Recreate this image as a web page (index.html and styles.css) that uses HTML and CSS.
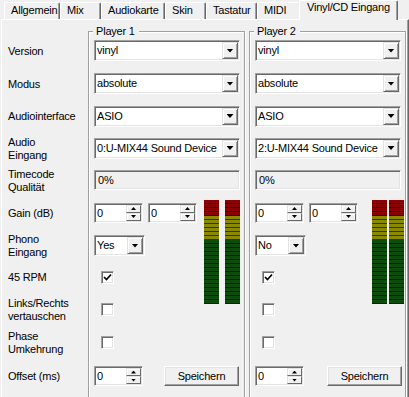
FILE: index.html
```html
<!DOCTYPE html>
<html>
<head>
<meta charset="utf-8">
<link rel="stylesheet" href="styles.css">
</head>
<body>
<div class="tabs">
  <div class="tab">Allgemein</div>
  <div class="tab">Mix</div>
  <div class="tab">Audiokarte</div>
  <div class="tab">Skin</div>
  <div class="tab">Tastatur</div>
  <div class="tab">MIDI</div>
  <div class="tab active">Vinyl/CD Eingang</div>
</div>
<div class="panel">
  <div class="labels rows">
    <div class="lbl">Version</div>
    <div class="lbl">Modus</div>
    <div class="lbl">Audiointerface</div>
    <div class="lbl">Audio<br>Eingang</div>
    <div class="lbl">Timecode<br>Qualität</div>
    <div class="lbl">Gain (dB)</div>
    <div class="lbl">Phono<br>Eingang</div>
    <div class="lbl">45 RPM</div>
    <div class="lbl">Links/Rechts<br>vertauschen</div>
    <div class="lbl">Phase<br>Umkehrung</div>
    <div class="lbl">Offset (ms)</div>
  </div>

  <div class="group group-1">
    <span class="legend">Player 1</span>
    <div class="rows grid">
      <div class="combo full"><span class="combo-text">vinyl</span><span class="combo-btn"></span></div>
      <div class="combo full"><span class="combo-text">absolute</span><span class="combo-btn"></span></div>
      <div class="combo full"><span class="combo-text">ASIO</span><span class="combo-btn"></span></div>
      <div class="combo full"><span class="combo-text">0:U-MIX44 Sound Device</span><span class="combo-btn"></span></div>
      <div class="field full">0%</div>
      <div class="pair">
        <div class="spin"><span class="spin-text">0</span><span class="spin-btns"><span class="sb up"></span><span class="sb down"></span></span></div>
        <div class="spin"><span class="spin-text">0</span><span class="spin-btns"><span class="sb up"></span><span class="sb down"></span></span></div>
      </div>
      <div class="combo small"><span class="combo-text">Yes</span><span class="combo-btn"></span></div>
      <div class="check checked"><svg width="9" height="9" viewBox="0 0 9 9"><polyline points="1,4 3.5,6.5 8,1.5" fill="none" stroke="#000" stroke-width="1.7"/></svg></div>
      <div class="check"></div>
      <div class="check"></div>
      <div class="pair full">
        <div class="spin"><span class="spin-text">0</span><span class="spin-btns"><span class="sb up"></span><span class="sb down"></span></span></div>
        <div class="button">Speichern</div>
      </div>
      <div class="meters">
        <div class="meter"></div>
        <div class="meter"></div>
      </div>
    </div>
  </div>

  <div class="group group-2">
    <span class="legend">Player 2</span>
    <div class="rows grid">
      <div class="combo full"><span class="combo-text">vinyl</span><span class="combo-btn"></span></div>
      <div class="combo full"><span class="combo-text">absolute</span><span class="combo-btn"></span></div>
      <div class="combo full"><span class="combo-text">ASIO</span><span class="combo-btn"></span></div>
      <div class="combo full"><span class="combo-text">2:U-MIX44 Sound Device</span><span class="combo-btn"></span></div>
      <div class="field full">0%</div>
      <div class="pair">
        <div class="spin"><span class="spin-text">0</span><span class="spin-btns"><span class="sb up"></span><span class="sb down"></span></span></div>
        <div class="spin"><span class="spin-text">0</span><span class="spin-btns"><span class="sb up"></span><span class="sb down"></span></span></div>
      </div>
      <div class="combo small"><span class="combo-text">No</span><span class="combo-btn"></span></div>
      <div class="check checked"><svg width="9" height="9" viewBox="0 0 9 9"><polyline points="1,4 3.5,6.5 8,1.5" fill="none" stroke="#000" stroke-width="1.7"/></svg></div>
      <div class="check"></div>
      <div class="check"></div>
      <div class="pair full">
        <div class="spin"><span class="spin-text">0</span><span class="spin-btns"><span class="sb up"></span><span class="sb down"></span></span></div>
        <div class="button wide-gap">Speichern</div>
      </div>
      <div class="meters tight">
        <div class="meter"></div>
        <div class="meter"></div>
      </div>
    </div>
  </div>
</div>
</body>
</html>
```

FILE: styles.css
```css
* { box-sizing: border-box; }
html, body { margin: 0; padding: 0; }
body {
  width: 409px;
  height: 397px;
  overflow: hidden;
  background: #f0f0f0;
  font-family: "Liberation Sans", Arial, sans-serif;
  font-size: 11px;
  letter-spacing: -0.2px;
  line-height: 13px;
  color: #000;
}

/* ---------- tabs ---------- */
.tabs {
  display: flex;
  align-items: flex-end;
  height: 19px;
  padding-left: 4px;
}
.tab {
  height: 17px;
  padding: 1px 0 0 6px;
  white-space: nowrap;
  border-top: 1px solid #fff;
  border-left: 1px solid #fff;
  border-right: 1px solid #696969;
  box-shadow: inset -1px 0 0 #a0a0a0;
  border-radius: 2px 2px 0 0;
  background: #f0f0f0;
}
.tab:nth-child(1) { width: 56px; }
.tab:nth-child(2) { width: 41px; }
.tab:nth-child(3) { width: 64px; }
.tab:nth-child(4) { width: 41px; }
.tab:nth-child(5) { width: 51px; }
.tab:nth-child(6) { width: 44px; }
.tab.active {
  width: 99px;
  height: 20px;
  margin: 0 -1px -1px -2px;
  padding: 0 0 0 7px;
  position: relative;
  z-index: 1;
}

/* ---------- panel ---------- */
.panel {
  display: flex;
  align-items: flex-start;
  margin-left: 1px;
  height: 378px;
  padding-top: 11px;
  border-top: 1px solid #fff;
  border-left: 1px solid #fff;
  border-right: 1px solid #696969;
  box-shadow: inset -1px 0 0 #a0a0a0;
}

.rows {
  display: grid;
  grid-template-rows: 33px 33px 32px 32px 32px 33px 33px 30px 34px 33px 34px;
}

.labels {
  width: 86px;
  padding: 3px 0 0 6px;
}
.lbl {
  align-self: center;
  padding-top: 1px;
}

/* ---------- group boxes (continue past the bottom edge) ---------- */
.group {
  position: relative;
  height: 366px;
  border: 1px solid #a0a0a0;
  border-bottom: 0;
  box-shadow: inset 1px 1px 0 #fff, 1px 0 0 #fff;
  padding: 2px 0 0 5px;
}
.group-1 { width: 157px; }
.group-2 { width: 157px; margin-left: 4px; }
.legend {
  position: absolute;
  top: -7px;
  left: 4px;
  padding: 0 4px 0 3px;
  background: #f0f0f0;
}

.grid {
  grid-template-columns: 1fr auto;
}
.grid > * { grid-column: 1; align-self: center; }
.grid > .full { grid-column: 1 / -1; }

/* ---------- combo box ---------- */
.combo {
  display: flex;
  height: 21px;
  padding: 1px;
  background: #fff;
  border: 1px solid;
  border-color: #a0a0a0 #fff #fff #a0a0a0;
  box-shadow: inset 1px 1px 0 #696969, inset -1px -1px 0 #e3e3e3;
}
.combo.full { width: 146px; }
.combo.small { width: 51px; }
.combo-text {
  flex: 1;
  padding: 2px 0 0 1px;
  white-space: nowrap;
  overflow: hidden;
}
.combo-btn {
  width: 16px;
  display: flex;
  align-items: center;
  justify-content: center;
  background: #f0f0f0;
  border: 1px solid;
  border-color: #e3e3e3 #696969 #696969 #e3e3e3;
  box-shadow: inset 1px 1px 0 #fff, inset -1px -1px 0 #a0a0a0;
}
.combo-btn::after {
  content: "";
  width: 7px;
  height: 4px;
  background: #000;
  clip-path: polygon(0 0, 100% 0, 50% 100%);
}

/* ---------- text field ---------- */
.field {
  width: 146px;
  height: 20px;
  padding: 3px 0 0 3px;
  background: #f0f0f0;
  border: 1px solid;
  border-color: #a0a0a0 #fff #fff #a0a0a0;
  box-shadow: inset 1px 1px 0 #696969, inset -1px -1px 0 #e3e3e3;
}

/* ---------- spin box ---------- */
.pair {
  display: flex;
  gap: 5px;
  align-items: center;
}
.spin {
  display: flex;
  width: 49px;
  height: 20px;
  padding: 1px;
  background: #fff;
  border: 1px solid;
  border-color: #a0a0a0 #fff #fff #a0a0a0;
  box-shadow: inset 1px 1px 0 #696969, inset -1px -1px 0 #e3e3e3;
}
.spin-text {
  flex: 1;
  padding: 2px 0 0 1px;
}
.spin-btns {
  width: 15px;
  display: flex;
  flex-direction: column;
}
.sb {
  flex: 1;
  display: flex;
  align-items: center;
  justify-content: center;
  background: #f0f0f0;
  border: 1px solid;
  border-color: #e3e3e3 #696969 #696969 #e3e3e3;
  box-shadow: inset 1px 1px 0 #fff;
}
.sb::after {
  content: "";
  width: 5px;
  height: 3px;
  background: #000;
}
.sb.up::after { clip-path: polygon(50% 0, 100% 100%, 0 100%); }
.sb.down::after { clip-path: polygon(0 0, 100% 0, 50% 100%); }

/* ---------- checkbox ---------- */
.check {
  width: 13px;
  height: 13px;
  margin-left: 7px;
  display: flex;
  align-items: center;
  justify-content: center;
  background: #fff;
  border: 1px solid;
  border-color: #a0a0a0 #fff #fff #a0a0a0;
  box-shadow: inset 1px 1px 0 #696969, inset -1px -1px 0 #e3e3e3;
}

/* ---------- push button ---------- */
.button {
  width: 75px;
  height: 20px;
  margin-left: 16px;
  padding-top: 3px;
  text-align: center;
  background: #f0f0f0;
  border: 1px solid;
  border-color: #fff #696969 #696969 #fff;
  box-shadow: inset -1px -1px 0 #a0a0a0, inset 1px 1px 0 #e3e3e3;
}
.button.wide-gap { margin-left: 18px; }

/* ---------- VU meters ---------- */
.grid > .meters {
  grid-column: 2;
  grid-row: 6 / 10;
  align-self: start;
  margin-top: 4px;
  margin-right: 4px;
  display: flex;
  gap: 6px;
}
.grid > .meters.tight {
  gap: 2px;
  margin-right: 1px;
}
.meter {
  width: 15px;
  height: 104px;
  background:
    repeating-linear-gradient(to bottom, transparent 0 3px, rgba(0, 0, 0, 0.6) 3px 4px),
    linear-gradient(to bottom, #8c0000 0 16px, #8a8a00 16px 40px, #0b4e0b 40px 104px);
}
```
